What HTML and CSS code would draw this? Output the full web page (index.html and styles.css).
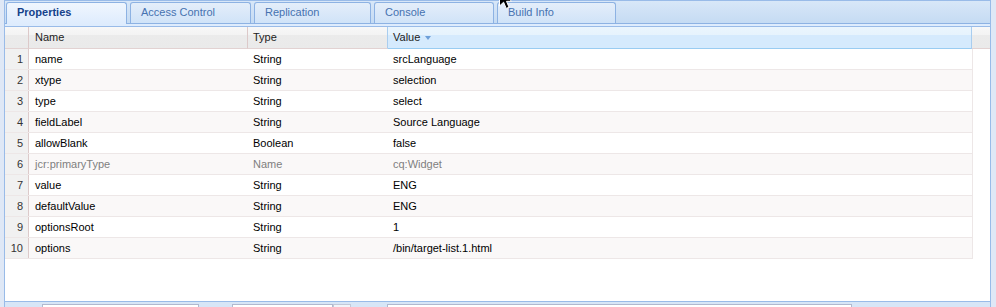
FILE: index.html
```html
<!DOCTYPE html>
<html lang="en">
<head>
    <meta charset="UTF-8">
    <title>Properties</title>
    <link rel="stylesheet" href="styles.css">
</head>
<body>
    <div class="panel">
        <div class="tabstrip">
            <div class="tab tab-properties active">Properties</div>
            <div class="tab tab-access">Access Control</div>
            <div class="tab tab-replication">Replication</div>
            <div class="tab tab-console">Console</div>
            <div class="tab tab-build">Build Info</div>
        </div>
        <div class="tab-spacer"></div>

        <div class="grid">
            <div class="grid-head">
                <div class="hd hd-num"></div>
                <div class="hd hd-name">Name</div>
                <div class="hd hd-type">Type</div>
                <div class="hd hd-value sorted">Value <span class="sort-arrow"></span></div>
                <div class="hd hd-filler"></div>
            </div>
            <div class="grid-body">
                <div class="row"><div class="num">1</div><div class="c-name">name</div><div class="c-type">String</div><div class="c-value">srcLanguage</div></div>
                <div class="row alt"><div class="num">2</div><div class="c-name">xtype</div><div class="c-type">String</div><div class="c-value">selection</div></div>
                <div class="row"><div class="num">3</div><div class="c-name">type</div><div class="c-type">String</div><div class="c-value">select</div></div>
                <div class="row alt"><div class="num">4</div><div class="c-name">fieldLabel</div><div class="c-type">String</div><div class="c-value">Source Language</div></div>
                <div class="row"><div class="num">5</div><div class="c-name">allowBlank</div><div class="c-type">Boolean</div><div class="c-value">false</div></div>
                <div class="row alt protected"><div class="num">6</div><div class="c-name">jcr:primaryType</div><div class="c-type">Name</div><div class="c-value">cq:Widget</div></div>
                <div class="row"><div class="num">7</div><div class="c-name">value</div><div class="c-type">String</div><div class="c-value">ENG</div></div>
                <div class="row alt"><div class="num">8</div><div class="c-name">defaultValue</div><div class="c-type">String</div><div class="c-value">ENG</div></div>
                <div class="row"><div class="num">9</div><div class="c-name">optionsRoot</div><div class="c-type">String</div><div class="c-value">1</div></div>
                <div class="row alt"><div class="num">10</div><div class="c-name">options</div><div class="c-type">String</div><div class="c-value">/bin/target-list.1.html</div></div>
            </div>
        </div>

        <div class="toolbar">
            <div class="field field-name"></div>
            <div class="field field-type"></div>
            <div class="field trigger"></div>
            <div class="field field-value"></div>
        </div>
    </div>

    <svg class="cursor" width="14" height="22" viewBox="0 0 14 22">
        <path d="M0.5 0.5 L0.5 17 L4.6 13.2 L7.2 19.4 L10 18.2 L7.5 12.3 L12.6 12.3 Z" fill="#000" stroke="#fff" stroke-width="1"/>
    </svg>
</body>
</html>
```

FILE: styles.css
```css
body {
    margin: 0;
    background-color: #dfe8f6;
    font-family: "Liberation Sans", Arial, sans-serif;
    font-size: 11px;
    height: 307px;
    overflow: hidden;
}

.panel {
    margin-left: 4px;
    width: 985px;
    height: 307px;
    border-left: 1px solid #99bbe8;
    border-right: 1px solid #99bbe8;
}

/* tabs */
.tabstrip {
    display: flex;
    align-items: flex-start;
    gap: 3px;
    height: 21px;
    padding: 1px 0 0 1px;
    border-top: 1px solid #99bbe8;
    border-bottom: 1px solid #8db2e3;
    background: linear-gradient(#d8e7f8, #c5dbf3);
}

.tab {
    box-sizing: border-box;
    height: 21px;
    padding-left: 10px;
    line-height: 19px;
    border: 1px solid #8db2e3;
    border-bottom: none;
    border-radius: 3px 3px 0 0;
    color: #4672b0;
    background: linear-gradient(#e4eefa, #d0e3f8);
}

.tab.active {
    height: 22px;
    margin-bottom: -1px;
    font-weight: bold;
    color: #15428b;
    background: linear-gradient(#f0f6fe, #deecfd);
}

.tab-properties { width: 121px; }
.tab-access { width: 121px; }
.tab-replication { width: 117px; }
.tab-console { width: 120px; }
.tab-build { width: 119px; }

.tab-spacer {
    height: 2px;
    background-color: #deecfd;
    border-bottom: 1px solid #99bbe8;
}

/* grid */
.grid-head {
    display: flex;
    height: 22px;
}

.hd {
    box-sizing: border-box;
    height: 22px;
    padding-left: 5px;
    line-height: 21px;
    color: #222;
    border-bottom: 1px solid #e2d2d2;
    border-right: 1px solid #dcc9c9;
    background: linear-gradient(#f8f8f8, #f3f3f3 8px, #ebebeb 8px, #eaeaea);
}

.hd-num { width: 24px; padding: 0; }
.hd-name { width: 219px; padding-left: 6px; }
.hd-type { width: 140px; border-right-color: #a9cdef; }
.hd-value { width: 584px; }
.hd-filler { width: 18px; border-right: none; }

.hd.sorted {
    border-right-color: #a9cdef;
    border-bottom-color: #99ccf2;
    background: linear-gradient(#eaf5fd, #e6f3fd 8px, #d5eafd 8px, #d5eafd);
}

.sort-arrow {
    display: inline-block;
    margin-left: 2px;
    vertical-align: 1px;
    border-left: 3.5px solid transparent;
    border-right: 3.5px solid transparent;
    border-top: 4px solid #6d9fd8;
}

.grid-body {
    height: 252px;
    background-color: #fff;
}

.row {
    display: flex;
    box-sizing: border-box;
    width: 968px;
    height: 21px;
    line-height: 20px;
    color: #000;
    border-bottom: 1px solid #ede7e7;
    border-right: 1px solid #ede7e7;
}

.row.alt {
    background-color: #faf8f8;
}

.row.protected {
    color: #7f7f7f;
}

.row .num {
    box-sizing: border-box;
    width: 24px;
    padding-right: 5px;
    text-align: right;
    color: #333;
    background-color: #f1f1f1;
    border-right: 1px solid #dccaca;
}

.c-name, .c-type, .c-value {
    box-sizing: border-box;
    padding-left: 5px;
    white-space: nowrap;
}

.c-name { width: 219px; padding-left: 6px; }
.c-type { width: 140px; }
.c-value { width: 584px; }

/* bottom toolbar */
.toolbar {
    display: flex;
    height: 5px;
    padding: 2px 0 0 37px;
    border-top: 1px solid #99bbe8;
    background-color: #d7e6f7;
    overflow: hidden;
}

.field {
    box-sizing: border-box;
    height: 20px;
    background-color: #fff;
    border: 1px solid #b0b9cf;
}

.field-name { width: 157px; }
.field-type { width: 101px; margin-left: 33px; }
.trigger { width: 18px; background-color: #f2f5fa; border-color: #c2c9d8; }
.field-value { width: 465px; margin-left: 36px; }

.cursor {
    position: absolute;
    left: 499px;
    top: -11px;
}
```
